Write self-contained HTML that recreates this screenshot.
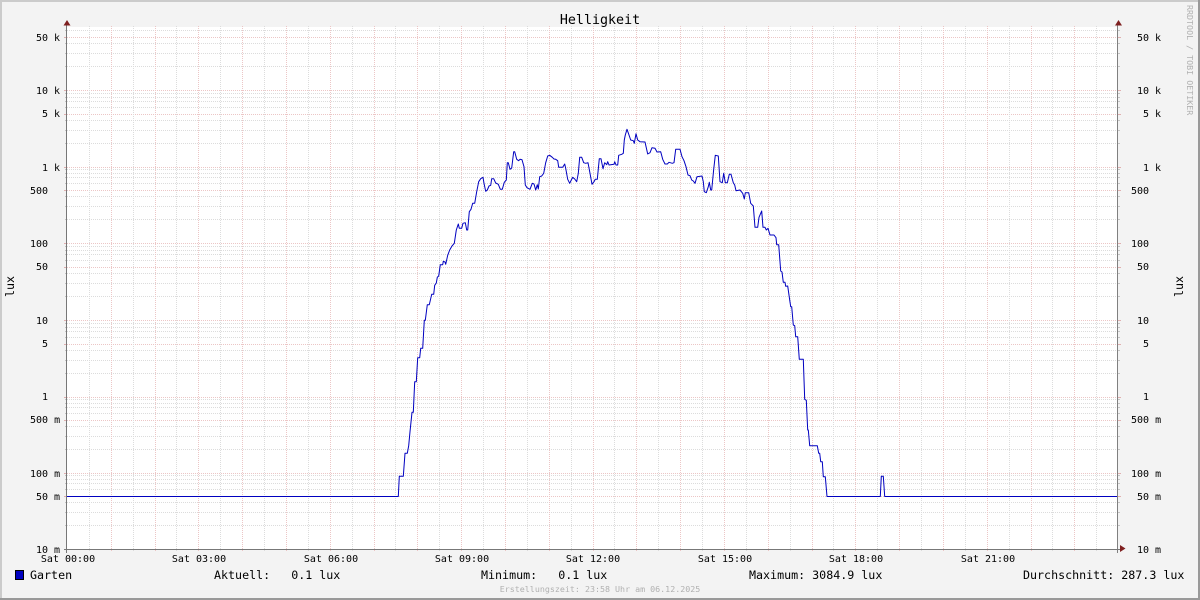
<!DOCTYPE html>
<html><head><meta charset="utf-8"><title>Helligkeit</title>
<style>
html,body{margin:0;padding:0;background:#f3f3f3}
svg{display:block}
text{font-family:"DejaVu Sans Mono","Liberation Mono",monospace;fill:#000;white-space:pre}
.t{font-size:10px}
.l{font-size:11.67px}
.f{font-size:8.33px;fill:#b0b0b0}
</style></head><body>
<svg xmlns="http://www.w3.org/2000/svg" width="1200" height="600" viewBox="0 0 1200 600">
<defs>
<g id="dec" shape-rendering="crispEdges">
<path d="M67 -23.5H1118M67 -36.5H1118M67 -46.5H1118M67 -59.5H1118M67 -65.5H1118M67 -69.5H1118M67 -73.5H1118" fill="none" stroke="#dcdcdc" stroke-dasharray="1 1"/>
<path d="M67 .5H1118M67 -52.5H1118" fill="none" stroke="#ecc6c6" stroke-dasharray="1 1"/>
<path d="M65 -23.5H67M65 -36.5H67M65 -46.5H67M65 -59.5H67M65 -65.5H67M65 -69.5H67M65 -73.5H67M1118 -23.5H1120M1118 -36.5H1120M1118 -46.5H1120M1118 -59.5H1120M1118 -65.5H1120M1118 -69.5H1120M1118 -73.5H1120" fill="none" stroke="#c4c4c4"/>
<path d="M64 .5H67M64 -52.5H67M1118 .5H1121M1118 -52.5H1121" fill="none" stroke="#dfb0b0"/>
</g>
<clipPath id="c"><rect x="60" y="27" width="1070" height="530"/></clipPath>
</defs>
<rect width="1200" height="600" fill="#f3f3f3"/>
<rect x="0" y="0" width="1200" height="2" fill="#cbcbcb"/>
<rect x="0" y="0" width="2" height="600" fill="#cbcbcb"/>
<rect x="0" y="598" width="1200" height="2" fill="#999"/>
<rect x="1198" y="0" width="2" height="600" fill="#999"/>
<rect x="67" y="27" width="1051" height="522" fill="#fff"/>
<g clip-path="url(#c)">
<use href="#dec" x="0" y="549"/>
<use href="#dec" x="0" y="473"/>
<use href="#dec" x="0" y="397"/>
<use href="#dec" x="0" y="320"/>
<use href="#dec" x="0" y="243"/>
<use href="#dec" x="0" y="167"/>
<use href="#dec" x="0" y="90"/>
</g>
<g shape-rendering="crispEdges" fill="none" stroke-dasharray="1 1">
<path stroke="#dcdcdc" d="M89.5 26V552M133.5 26V552M176.5 26V552M220.5 26V552M264.5 26V552M308.5 26V552M352.5 26V552M395.5 26V552M439.5 26V552M483.5 26V552M527.5 26V552M571.5 26V552M614.5 26V552M658.5 26V552M702.5 26V552M746.5 26V552M790.5 26V552M833.5 26V552M877.5 26V552M921.5 26V552M965.5 26V552M1009.5 26V552M1052.5 26V552M1096.5 26V552"/>
<path stroke="#ecc6c6" d="M111.5 26V552M155.5 26V552M198.5 26V552M242.5 26V552M286.5 26V552M330.5 26V552M374.5 26V552M417.5 26V552M461.5 26V552M505.5 26V552M549.5 26V552M593.5 26V552M636.5 26V552M680.5 26V552M724.5 26V552M768.5 26V552M812.5 26V552M855.5 26V552M899.5 26V552M943.5 26V552M987.5 26V552M1031.5 26V552M1074.5 26V552"/>
</g>
<path fill="none" stroke="#0000c0" stroke-width="1" stroke-linejoin="round" d="M67 496.5H398.3L399.3 476.3H403.3L405 453.3H407.3L408.7 445.7L410 431.7L412 412.3H413.3L414.7 381.7H416.3L417.7 357.7H419.7L420.7 348.3H422.7L424.3 320.3H425.3L427.3 304.7H429.3L431.7 294.3H433.7L434.7 285.3L436.3 283L437.3 277.3L438.7 276L440.3 264.7H442.7L443.3 261.3L445 262L445.7 264.3L447.7 255.3L449.7 250L452 246L454.3 243.3L456.3 230L458.3 224L459.3 228.3H461.7L463 223.3L465.3 222.7L466.7 230H467.7L469.3 211.7L471 209.3L472.7 203.3H474.7L476.7 191.7L478.7 181.7L480.7 178.7L483 177.3L484 183.3L485.7 191.3L487.3 190L489 186L490.7 185.3L491.7 178.7H493.7L495.7 183L498.3 184.3L500.3 189.3H502.3L504.3 182.3L506.3 180L507.3 162.7H508.3L510 169.3L511.7 168L513.7 151.7H514.7L516.7 159.3L518.7 160.7L520 159.3L522 159.7L524 166.7L525.3 185L527 187.7L530 189.3L532.3 183.3L534 184L535.7 190L537.3 184.7L538.3 189L539.7 176.7L541.7 176L543.7 173.3L545.7 162.7L547.7 156L549.7 155.3L552.3 157.3L554 159L555.7 159.3L557.7 160.7L558.7 167.3H562.7L564.7 164L565.7 168.3L567.7 179.3L569.7 183.3L571.3 180L572.7 177.3L574.7 179L576.7 181.7L578.3 173.3L579.7 157.3H581.7L583.7 162.7L585.7 163.3L588 162.7L590 173.3L592 184.3L594 181.7L595.3 179.3H597.3L599.3 158.7H601L603 168.7L604.7 162.7L606.7 164.7L607.7 161.7L609 165L614 164.3L614.7 161.7L616 165H617.7L618.7 155.3L621.7 154.3L623.3 153.3L624.3 140L625.3 135L627 129.3L629 135L630.7 140L633.3 140.7L634.3 143.3L636 133.7L637.7 140L640 141.7L645 142L647.7 154L650 152.7L652 147.7L655 148.3L657 152L660.7 151.7L662.7 159.3L665 164H667.3L669 162.3L672.3 163.3L674 162.7L675.7 149.3H680L682 156.7L684 160.7L686 166.7L688 175L690 175.7L691.7 180L693.3 181L695 183.3L697 176.7L702 176L703.3 181.7L704.3 191.7L706.3 192.7L708.3 186.7L709.3 182.3L710.7 190H711.7L713.7 169.3L715.3 155.3L718.3 156L720 181.7L722.3 182.7L723.7 173.3L725.3 182.7H727.3L729.3 174.3H731L733.3 182.7L734.7 185L736 190.7L740 190L742.7 193.3L744.3 199L745.3 192.7H748.7L750.7 203.3L753.3 206L755 227.3H757.7L759 217.3L761.7 211L763 227.3H765L766.3 230L768 228.3L770 235H774L776 237.7L776.7 244.7H778.7L780.7 271L782 272L783.3 282.3H785L785.7 286.3L787.7 286L789.7 300L790.7 306.7H791.7L793.3 325L794.7 325.7L795.7 336.7H797.7L799.3 359.3H803.3L804.7 399.3L806.3 400.3L807.7 430H808.3L809.7 445.7H817.3L818.7 453.3H819.7L820.7 461.7H822.3L823.3 476.7H825.3L827 496.5H880.3L881.3 476.3H883.3L884.7 496.5H1118"/>
<g shape-rendering="crispEdges">
<rect x="66" y="25" width="1" height="528" fill="#777"/>
<rect x="1117" y="25" width="1" height="528" fill="#808080"/>
<rect x="64" y="549" width="1057" height="1" fill="#777"/>
</g>
<path d="M67 20L70.5 25.5H63.5Z" fill="#7f2020"/>
<path d="M1118.5 20L1122 25.5H1115Z" fill="#7f2020"/>
<path d="M1125.5 548.5L1120 545V552Z" fill="#7f2020"/>
<text x="600" y="24" text-anchor="middle" style="font-size:13.33px">Helligkeit</text>
<g class="t">
<text class="t" x="36" y="41">50 k</text><text class="t" x="36" y="94">10 k</text><text class="t" x="42" y="117">5 k</text><text class="t" x="42" y="171">1 k</text><text class="t" x="30" y="194">500</text><text class="t" x="30" y="247">100</text><text class="t" x="36" y="270">50</text><text class="t" x="36" y="324">10</text><text class="t" x="42" y="347">5</text><text class="t" x="42" y="400">1</text><text class="t" x="30" y="423">500 m</text><text class="t" x="30" y="477">100 m</text><text class="t" x="36" y="500">50 m</text><text class="t" x="36" y="553">10 m</text>
<text class="t" x="1137" y="41">50 k</text><text class="t" x="1137" y="94">10 k</text><text class="t" x="1143" y="117">5 k</text><text class="t" x="1143" y="171">1 k</text><text class="t" x="1131" y="194">500</text><text class="t" x="1131" y="247">100</text><text class="t" x="1137" y="270">50</text><text class="t" x="1137" y="324">10</text><text class="t" x="1143" y="347">5</text><text class="t" x="1143" y="400">1</text><text class="t" x="1131" y="423">500 m</text><text class="t" x="1131" y="477">100 m</text><text class="t" x="1137" y="500">50 m</text><text class="t" x="1137" y="553">10 m</text>
<text class="t" x="68" y="562" text-anchor="middle">Sat 00:00</text><text class="t" x="199" y="562" text-anchor="middle">Sat 03:00</text><text class="t" x="331" y="562" text-anchor="middle">Sat 06:00</text><text class="t" x="462" y="562" text-anchor="middle">Sat 09:00</text><text class="t" x="593" y="562" text-anchor="middle">Sat 12:00</text><text class="t" x="725" y="562" text-anchor="middle">Sat 15:00</text><text class="t" x="856" y="562" text-anchor="middle">Sat 18:00</text><text class="t" x="988" y="562" text-anchor="middle">Sat 21:00</text>
</g>
<text class="l" transform="translate(14 297) rotate(-90)">lux</text>
<text class="l" transform="translate(1183 297) rotate(-90)">lux</text>
<text class="f" transform="translate(1187 5) rotate(90)">RRDTOOL / TOBI OETIKER</text>
<rect x="15.5" y="570.5" width="8" height="9" fill="#0000c0" stroke="#000"/>
<text class="l" x="30" y="579">Garten</text>
<text class="l" x="214" y="579">Aktuell:   0.1 lux</text>
<text class="l" x="481" y="579">Minimum:   0.1 lux</text>
<text class="l" x="749" y="579">Maximum: 3084.9 lux</text>
<text class="l" x="1023" y="579">Durchschnitt: 287.3 lux</text>
<text class="f" x="600" y="592" text-anchor="middle">Erstellungszeit: 23:58 Uhr am 06.12.2025</text>
</svg>
</body></html>
